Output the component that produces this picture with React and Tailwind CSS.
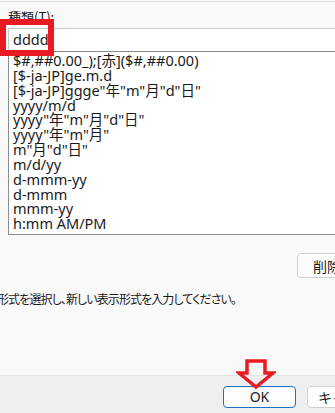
const formats = [
  '$#,##0.00_);[赤]($#,##0.00)',
  '[$-ja-JP]ge.m.d',
  '[$-ja-JP]ggge"年"m"月"d"日"',
  'yyyy/m/d',
  'yyyy"年"m"月"d"日"',
  'yyyy"年"m"月"',
  'm"月"d"日"',
  'm/d/yy',
  'd-mmm-yy',
  'd-mmm',
  'mmm-yy',
  'h:mm AM/PM',
];

function DownArrow() {
  return (
    <svg
      width="40"
      height="32"
      viewBox="0 0 40 32"
      className="absolute left-[236px] top-[358px]"
    >
      <polygon
        points="11,3 29,3 29,15 37,15 20,29 3,15 11,15"
        fill="none"
        stroke="#e81b23"
        strokeWidth="3.5"
        strokeLinejoin="miter"
      />
    </svg>
  );
}

export default function App() {
  return (
    <div className="relative w-[335px] h-[413px] overflow-hidden bg-[#f9f9f9] text-[#1a1a1a] font-['Noto_Sans','Noto_Sans_CJK_JP',sans-serif] flex flex-col">
      <div className="mt-px h-px bg-[#dedede]" />

      {/* type field */}
      <div className="pl-2 pt-[5px] text-[13px] leading-[20px] font-['Noto_Sans_CJK_JP',sans-serif]">
        種類(T):
      </div>
      <div className="ml-2 -mr-4 mt-px h-[24px] bg-white border border-[#c8c8c8] border-b-[#8a8a8a] flex items-center pl-1 text-[14.5px]">
        dddd
      </div>

      {/* format list */}
      <div className="ml-2 -mr-4 h-[183px] bg-white border border-t-0 border-[#8d8d8d] pt-[1px] pl-1">
        {formats.map((f) => (
          <div key={f} className="text-[14.5px] leading-[14.85px] whitespace-nowrap">
            {f}
          </div>
        ))}
      </div>

      <div className="flex justify-end mt-[18px] -mr-6">
        <button className="w-[62px] h-[25px] bg-[#fdfdfd] border border-[#d0d0d0] rounded-[4px] text-[14px] leading-none text-left pl-[15px] whitespace-nowrap font-['Noto_Sans_CJK_JP',sans-serif]">
          削除
        </button>
      </div>

      <p className="mt-[12px] -ml-[3px] text-[12px] leading-[18px] tracking-[-0.9px] whitespace-nowrap font-['Noto_Sans_CJK_JP',sans-serif] [font-feature-settings:'palt']">
        形式を選択し、新しい表示形式を入力してください。
      </p>

      <div className="flex-1" />

      {/* footer */}
      <div className="h-[38px] border-t border-[#e3e3e3] bg-[#efefef] flex items-start pt-[10px] pl-[223px] gap-[11px]">
        <button className="shrink-0 w-[73px] h-[22px] bg-[#fdfdfd] border border-[#1a6fc4] rounded-[4px] text-[14px] leading-none">
          OK
        </button>
        <button className="shrink-0 w-[73px] h-[22px] bg-[#fdfdfd] border border-[#d0d0d0] rounded-[4px] text-[14px] leading-none text-left pl-[10px] whitespace-nowrap font-['Noto_Sans_CJK_JP',sans-serif]">
          キャンセル
        </button>
      </div>

      {/* annotations */}
      <div className="absolute left-0 top-[19px] w-[54px] h-[37px] border-[6px] border-[#e81b23]" />
      <DownArrow />
    </div>
  );
}
